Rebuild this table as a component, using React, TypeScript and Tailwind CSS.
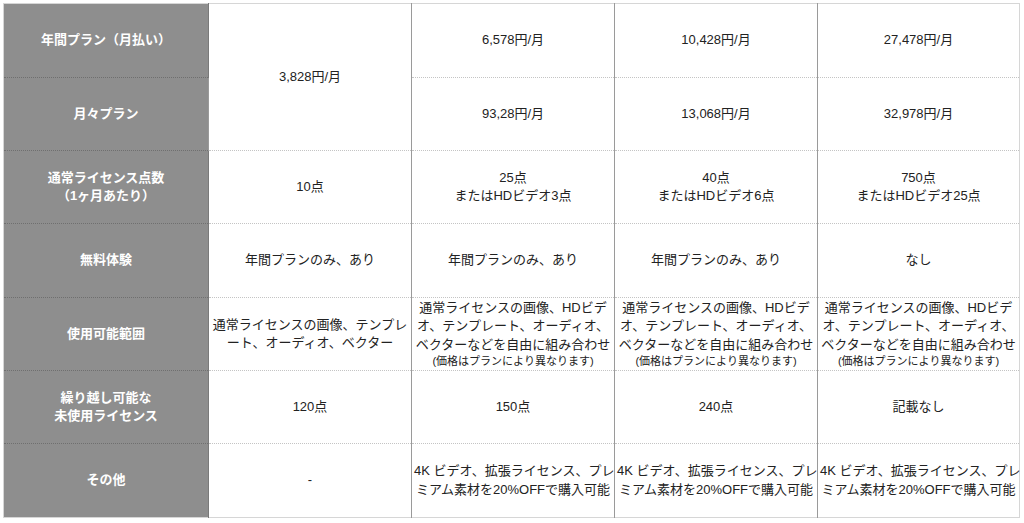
const FONT = 'font-["Liberation_Sans","Noto_Sans_CJK_JP",sans-serif]';

const NOTE = "(価格はプランにより異なります)";

type Cell = { lines: string[]; note?: boolean };

const rows: { head: string[]; h: string; cells: (Cell | null)[] }[] = [
  {
    head: ["年間プラン（月払い）"],
    h: "h-[74px]",
    cells: [{ lines: ["3,828円/月"] }, { lines: ["6,578円/月"] }, { lines: ["10,428円/月"] }, { lines: ["27,478円/月"] }],
  },
  {
    head: ["月々プラン"],
    h: "h-[73px]",
    cells: [null, { lines: ["93,28円/月"] }, { lines: ["13,068円/月"] }, { lines: ["32,978円/月"] }],
  },
  {
    head: ["通常ライセンス点数", "（1ヶ月あたり）"],
    h: "h-[73px]",
    cells: [
      { lines: ["10点"] },
      { lines: ["25点", "またはHDビデオ3点"] },
      { lines: ["40点", "またはHDビデオ6点"] },
      { lines: ["750点", "またはHDビデオ25点"] },
    ],
  },
  {
    head: ["無料体験"],
    h: "h-[74px]",
    cells: [
      { lines: ["年間プランのみ、あり"] },
      { lines: ["年間プランのみ、あり"] },
      { lines: ["年間プランのみ、あり"] },
      { lines: ["なし"] },
    ],
  },
  {
    head: ["使用可能範囲"],
    h: "h-[73px]",
    cells: [
      { lines: ["通常ライセンスの画像、テンプレ", "ート、オーディオ、ベクター"] },
      { lines: ["通常ライセンスの画像、HDビデ", "オ、テンプレート、オーディオ、", "ベクターなどを自由に組み合わせ"], note: true },
      { lines: ["通常ライセンスの画像、HDビデ", "オ、テンプレート、オーディオ、", "ベクターなどを自由に組み合わせ"], note: true },
      { lines: ["通常ライセンスの画像、HDビデ", "オ、テンプレート、オーディオ、", "ベクターなどを自由に組み合わせ"], note: true },
    ],
  },
  {
    head: ["繰り越し可能な", "未使用ライセンス"],
    h: "h-[73px]",
    cells: [{ lines: ["120点"] }, { lines: ["150点"] }, { lines: ["240点"] }, { lines: ["記載なし"] }],
  },
  {
    head: ["その他"],
    h: "h-[74px]",
    cells: [
      { lines: ["-"] },
      { lines: ["4K ビデオ、拡張ライセンス、プレ", "ミアム素材を20%OFFで購入可能"] },
      { lines: ["4K ビデオ、拡張ライセンス、プレ", "ミアム素材を20%OFFで購入可能"] },
      { lines: ["4K ビデオ、拡張ライセンス、プレ", "ミアム素材を20%OFFで購入可能"] },
    ],
  },
];

export default function App() {
  return (
    <div className={`w-[1024px] h-[523px] bg-white p-[3px] ${FONT}`}>
      <table className="w-[1016px] table-fixed border-collapse border border-solid border-[#d6d6d6] text-[13px] leading-[18.5px] text-[#222]">
        <colgroup>
          <col className="w-[205px]" />
          <col className="w-[203px]" />
          <col className="w-[203px]" />
          <col className="w-[203px]" />
          <col className="w-[202px]" />
        </colgroup>
        <tbody>
          {rows.map((r, i) => (
            <tr key={i} className={r.h}>
              <th
                className={`bg-[#8e8e8e] text-white font-bold text-center align-middle border-r border-r-[#7a7a7a] [border-right-style:solid] ${
                  i < rows.length - 1 ? "border-b border-b-[#6f6f6f] [border-bottom-style:dotted]" : ""
                }`}
              >
                {r.head.map((l, k) => (
                  <div key={k}>{l}</div>
                ))}
              </th>
              {r.cells.map((c, j) =>
                c === null ? null : (
                  <td
                    key={j}
                    rowSpan={i === 0 && j === 0 ? 2 : 1}
                    className={`text-center align-middle px-[2px] border-l border-l-[#9a9a9a] [border-left-style:solid] ${
                      i < rows.length - 1 ? "border-b border-b-[#c4c4c4] [border-bottom-style:dotted]" : ""
                    }`}
                  >
                    {c.lines.map((l, k) => (
                      <div key={k} className="whitespace-nowrap">
                        {l}
                      </div>
                    ))}
                    {c.note && <div className="text-[11px] leading-[15px] whitespace-nowrap">{NOTE}</div>}
                  </td>
                )
              )}
            </tr>
          ))}
        </tbody>
      </table>
    </div>
  );
}
